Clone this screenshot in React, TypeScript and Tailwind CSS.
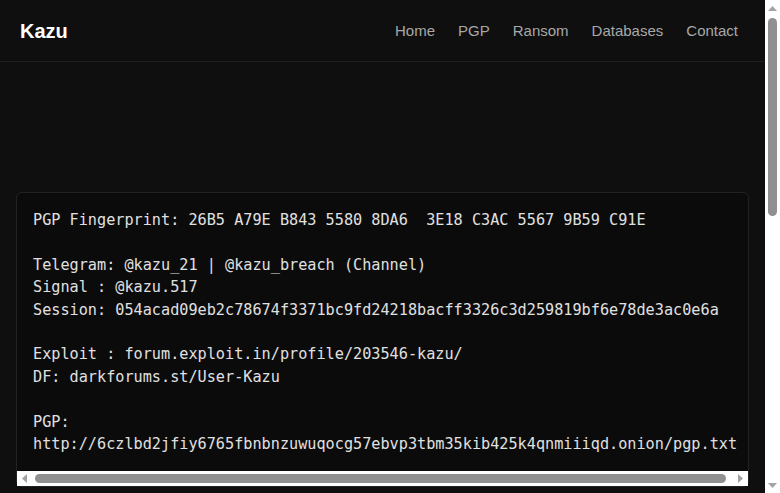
const lines = `PGP Fingerprint: 26B5 A79E B843 5580 8DA6  3E18 C3AC 5567 9B59 C91E

Telegram: @kazu_21 | @kazu_breach (Channel)
Signal : @kazu.517
Session: 054acad09eb2c78674f3371bc9fd24218bacff3326c3d259819bf6e78de3ac0e6a

Exploit : forum.exploit.in/profile/203546-kazu/
DF: darkforums.st/User-Kazu

PGP:
http://6czlbd2jfiy6765fbnbnzuwuqocg57ebvp3tbm35kib425k4qnmiiiqd.onion/pgp.txt`;

const links = ['Home', 'PGP', 'Ransom', 'Databases', 'Contact'];

function Arrow({ dir }: { dir: 'up' | 'down' | 'left' | 'right' }) {
  const pts = {
    up: '0,5 4.5,0 9,5',
    down: '0,0 9,0 4.5,5',
    left: '5,0 5,9 0,4.5',
    right: '0,0 5,4.5 0,9',
  }[dir];
  const v = dir === 'up' || dir === 'down';
  return (
    <svg width={v ? 9 : 5} height={v ? 5 : 9} viewBox={v ? '0 0 9 5' : '0 0 5 9'} className="shrink-0">
      <polygon points={pts} fill="#a3a3a3" />
    </svg>
  );
}

export default function App() {
  return (
    <div className="flex h-screen bg-[#0f0f0f] font-['Liberation_Sans',Arial,sans-serif]">
      <div className="flex-1 min-w-0 overflow-y-auto [scrollbar-width:none]">
        <div className="min-h-[1141px] text-[#e5e5e5]">
          <header className="h-[62px] flex items-center justify-between pl-5 pr-[27px] border-b border-[#1f1f1f]">
            <div className="text-[20px] font-bold text-white">Kazu</div>
            <nav className="flex gap-[23px] text-[15px] text-[#a8a8a8] pt-px">
              {links.map((l) => (
                <a key={l} href="#" className="hover:text-white">{l}</a>
              ))}
            </nav>
          </header>
          <main className="px-4 pt-[130px]">
            <div className="bg-[#0b0b0b] border border-[#222] rounded-md">
              <pre className="p-4 overflow-x-auto [scrollbar-width:none] text-[15.2px] leading-[22.4px] text-[#e0e0e0] font-['DejaVu_Sans_Mono',monospace]">
                {lines}
              </pre>
              {/* horizontal scrollbar of the pre */}
              <div aria-hidden className="h-[15px] bg-white flex items-center pl-[5px] pr-[5px]">
                <Arrow dir="left" />
                <div className="flex-1 h-[9px] ml-[8px] mr-[12px] rounded-full bg-[#909090]" />
                <Arrow dir="right" />
              </div>
            </div>
          </main>
        </div>
      </div>
      {/* page scrollbar */}
      <div aria-hidden className="w-[15px] shrink-0 bg-white flex flex-col items-center pt-[6px] pb-[5px]">
        <Arrow dir="up" />
        <div className="w-[9px] h-[198px] mt-[7px] rounded-full bg-[#909090]" />
        <div className="flex-1" />
        <Arrow dir="down" />
      </div>
    </div>
  );
}
